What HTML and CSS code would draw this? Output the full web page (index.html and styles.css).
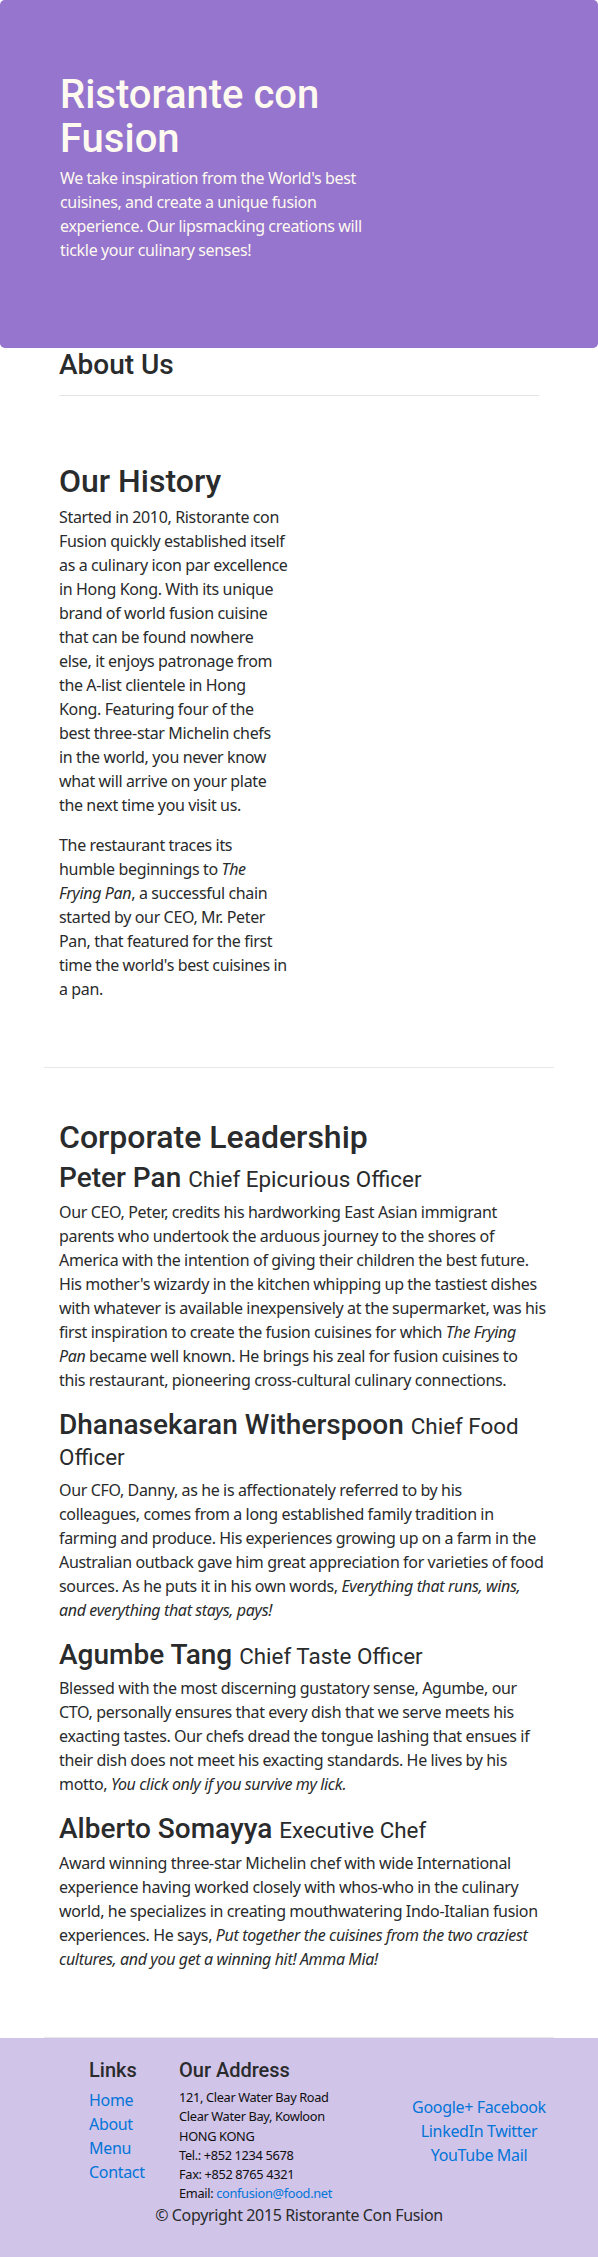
FILE: index.html
```html
<!DOCTYPE html>
<html lang="en">
<head>
<meta charset="utf-8">
<title>Ristorante con Fusion: About Us</title>
<link rel="stylesheet" href="styles.css">
</head>
<body>
<header class="jumbotron">
  <div class="container">
    <div class="row">
      <div class="col-hero">
        <h1>Ristorante con Fusion</h1>
        <p>We take inspiration from the World's best cuisines, and create a unique fusion experience. Our lipsmacking creations will tickle your culinary senses!</p>
      </div>
    </div>
  </div>
</header>

<main class="container">
  <div class="row-header">
    <h3>About Us</h3>
    <hr>
  </div>

  <div class="row-content">
    <div class="col-half">
      <h2>Our History</h2>
      <p>Started in 2010, Ristorante con Fusion quickly established itself as a culinary icon par excellence in Hong Kong. With its unique brand of world fusion cuisine that can be found nowhere else, it enjoys patronage from the A-list clientele in Hong Kong. Featuring four of the best three-star Michelin chefs in the world, you never know what will arrive on your plate the next time you visit us.</p>
      <p>The restaurant traces its humble beginnings to <em>The Frying Pan</em>, a successful chain started by our CEO, Mr. Peter Pan, that featured for the first time the world's best cuisines in a pan.</p>
    </div>
  </div>

  <div class="row-content">
    <div class="col-full">
      <h2>Corporate Leadership</h2>
      <h3>Peter Pan <small>Chief Epicurious Officer</small></h3>
      <p>Our CEO, Peter, credits his hardworking East Asian immigrant parents who undertook the arduous journey to the shores of America with the intention of giving their children the best future. His mother's wizardy in the kitchen whipping up the tastiest dishes with whatever is available inexpensively at the supermarket, was his first inspiration to create the fusion cuisines for which <em>The Frying Pan</em> became well known. He brings his zeal for fusion cuisines to this restaurant, pioneering cross-cultural culinary connections.</p>
      <h3>Dhanasekaran Witherspoon <small>Chief Food Officer</small></h3>
      <p>Our CFO, Danny, as he is affectionately referred to by his colleagues, comes from a long established family tradition in farming and produce. His experiences growing up on a farm in the Australian outback gave him great appreciation for varieties of food sources. As he puts it in his own words, <em>Everything that runs, wins, and everything that stays, pays!</em></p>
      <h3>Agumbe Tang <small>Chief Taste Officer</small></h3>
      <p>Blessed with the most discerning gustatory sense, Agumbe, our CTO, personally ensures that every dish that we serve meets his exacting tastes. Our chefs dread the tongue lashing that ensues if their dish does not meet his exacting standards. He lives by his motto, <em>You click only if you survive my lick.</em></p>
      <h3>Alberto Somayya <small>Executive Chef</small></h3>
      <p>Award winning three-star Michelin chef with wide International experience having worked closely with whos-who in the culinary world, he specializes in creating mouthwatering Indo-Italian fusion experiences. He says, <em>Put together the cuisines from the two craziest cultures, and you get a winning hit! Amma Mia!</em></p>
    </div>
  </div>
</main>

<footer class="footer">
  <div class="container">
    <div class="footer-row">
      <div class="col-links">
        <h5>Links</h5>
        <ul class="list-unstyled">
          <li><a href="#">Home</a></li>
          <li><a href="#">About</a></li>
          <li><a href="#">Menu</a></li>
          <li><a href="#">Contact</a></li>
        </ul>
      </div>
      <div class="col-address">
        <h5>Our Address</h5>
        <address>
          121, Clear Water Bay Road<br>
          Clear Water Bay, Kowloon<br>
          HONG KONG<br>
          Tel.: +852 1234 5678<br>
          Fax: +852 8765 4321<br>
          Email: <a href="#">confusion@food.net</a>
        </address>
      </div>
      <div class="col-social">
        <a href="#">Google+</a> <a href="#">Facebook</a> <a href="#">LinkedIn</a> <a href="#">Twitter</a> <a href="#">YouTube</a> <a href="#">Mail</a>
      </div>
    </div>
    <div class="copyright-row">
      <p>© Copyright 2015 Ristorante Con Fusion</p>
    </div>
  </div>
</footer>
</body>
</html>
```

FILE: styles.css
```css
* {
  box-sizing: border-box;
}

body {
  margin: 0;
  font-family: "Noto Sans", "Open Sans", sans-serif;
  font-size: 16px;
  line-height: 1.5;
  letter-spacing: -0.32px;
  word-spacing: -0.2px;
  color: #292b2c;
  background: #fff;
}

h1, h2, h3, h5 {
  font-family: Roboto, "Noto Sans", sans-serif;
  font-weight: 500;
  line-height: 1.1;
  letter-spacing: 0;
  word-spacing: 0;
}

h1 { font-size: 40px; padding-top: 3px; margin: 0 0 5px; }
h2 { font-size: 32px; padding-top: 2px; margin: 0 0 6px; }
h3 { font-size: 28px; padding-top: 2px; margin: 0 0 6px; }
h5 { font-size: 20px; padding-top: 1px; margin: 0 0 7px; }

h3 small {
  font-size: 80%;
  font-weight: 400;
}

p {
  margin: 0 0 16px;
}

a {
  color: #0275d8;
  text-decoration: none;
}

hr {
  margin: 16px 0;
  border: 0;
  border-top: 1px solid rgba(0, 0, 0, 0.1);
}

.container {
  max-width: 540px;
  margin: 0 auto;
  padding: 0 15px;
}

/* Jumbotron */
.jumbotron {
  background: #9575cd;
  color: floralwhite;
  padding: 70px 30px;
  border-radius: 4.8px;
}

.row {
  display: flex;
}

.col-hero {
  width: 66.667%;
  padding: 0 15px;
}

/* Main */
.row-header {
  padding: 0 15px;
}

.row-header hr {
  margin-top: 14px;
}

.row-content {
  display: flex;
  padding: 50px 0;
  min-height: 400px;
  border-bottom: 1px solid #e8e8e8;
}

.col-half {
  flex: 0 0 258.74px;
  padding: 0 15px;
}

.col-full {
  flex: 1 1 auto;
  padding: 0 8.07px 0 15px;
}

/* Footer */
.footer {
  background: #d1c4e9;
  padding: 20px 0;
}

.footer-row {
  display: flex;
  align-items: flex-start;
  margin: 0 -15px;
}

.col-links {
  margin-left: 8.3333%;
  width: 16.6667%;
  padding: 0 15px;
}

.col-address {
  width: 41.6667%;
  padding: 0 15px;
}

.col-social {
  width: 33.3333%;
  padding: 0 15px;
  align-self: center;
  text-align: center;
}

.list-unstyled {
  list-style: none;
  margin: 0 0 16px;
  padding: 0;
}

address {
  font-size: 80%;
  font-style: normal;
  margin: 0;
  color: #0f0f0f;
}

.copyright-row {
  display: flex;
  justify-content: center;
}
```
